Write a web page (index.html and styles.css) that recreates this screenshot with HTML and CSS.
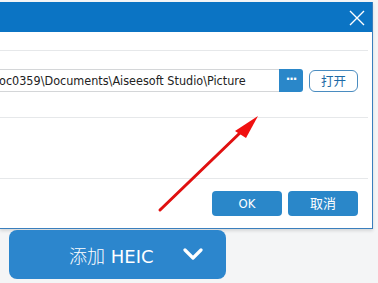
FILE: index.html
```html
<!DOCTYPE html>
<html>
<head>
<meta charset="utf-8">
<link rel="stylesheet" href="styles.css">
</head>
<body>
<div class="dialog">
  <div class="titlebar">
    <svg class="close" width="16" height="16" viewBox="0 0 16 16"><path d="M1 1L15 15M15 1L1 15" stroke="#fff" stroke-width="1.4" fill="none"/></svg>
  </div>
  <div class="row row-top"></div>
  <div class="row row-path">
    <div class="input">oc0359\Documents\Aiseesoft Studio\Picture</div>
    <div class="more">···</div>
    <div class="open">打开</div>
  </div>
  <div class="row row-empty"></div>
  <div class="footer">
    <div class="btn">OK</div>
    <div class="btn">取消</div>
  </div>
</div>
<div class="add">
  <span class="add-label"><span class="add-cn">添加</span> HEIC</span>
  <svg class="chev" width="20" height="13" viewBox="0 0 20 13"><path d="M2 2L10 10L18 2" stroke="#fff" stroke-width="3.2" fill="none" stroke-linecap="round" stroke-linejoin="round"/></svg>
</div>
<svg class="arrow" width="378" height="283" viewBox="0 0 378 283">
  <line x1="160" y1="210" x2="242" y2="131" stroke="#e01010" stroke-width="3" stroke-linecap="round"/>
  <polygon points="258,116 235,131 246,138" fill="#f01010"/>
</svg>
</body>
</html>
```
FILE: styles.css
```css
html, body {
  margin: 0;
  padding: 0;
}
body {
  width: 378px;
  height: 283px;
  overflow: hidden;
  background: #f4f5f6;
  position: relative;
  font-family: "DejaVu Sans", "Noto Sans CJK SC", sans-serif;
}
.dialog {
  margin-top: 2px;
  width: 372px;
  background: #fff;
  border-right: 1px solid #3a7fbd;
  border-bottom: 1px solid #3a7fbd;
  box-shadow: 0 2px 3px rgba(0,0,0,0.12);
}
.titlebar {
  height: 30px;
  background: #0b74c4;
  display: flex;
  align-items: center;
  justify-content: flex-end;
  padding-right: 7px;
}
.close {
  display: block;
  margin-top: 1px;
}
.row {
  border-bottom: 1px solid #e6e8ea;
  margin-right: 4px;
}
.row-top {
  height: 18px;
}
.row-path {
  padding-top: 18px;
  box-sizing: border-box;
  height: 67px;
  display: flex;
  align-items: flex-start;
}
.input {
  width: 280px;
  height: 23px;
  box-sizing: border-box;
  border: 1px solid #d4d6d8;
  border-left: none;
  border-right: none;
  font-family: "DejaVu Sans Condensed", "DejaVu Sans", sans-serif;
  font-size: 12.5px;
  line-height: 21px;
  color: #222;
  white-space: nowrap;
  overflow: hidden;
  margin-left: -1px;
}
.more {
  width: 24px;
  height: 23px;
  background: #2a87c9;
  border-radius: 0 3px 3px 0;
  color: #fff;
  font-size: 12px;
  line-height: 20px;
  text-align: center;
  font-weight: bold;
  letter-spacing: -1px;
}
.open {
  margin-left: 6px;
  width: 49px;
  height: 22px;
  box-sizing: border-box;
  border: 1px solid #4a8cc0;
  border-radius: 6px;
  color: #1c6aa6;
  font-family: "Noto Sans CJK SC", sans-serif;
  font-size: 12.5px;
  line-height: 20px;
  text-align: center;
  margin-top: 1px;
}
.row-empty {
  height: 60px;
}
.footer {
  height: 49px;
  box-sizing: border-box;
  padding-top: 12px;
  padding-right: 14px;
  display: flex;
  justify-content: flex-end;
  gap: 6px;
}
.btn {
  width: 70px;
  height: 25px;
  background: #2a87c9;
  border-radius: 4px;
  color: #fff;
  font-family: "DejaVu Sans Condensed", "Noto Sans CJK SC", sans-serif;
  font-size: 13px;
  line-height: 25px;
  text-align: center;
}
.add {
  margin: 1px 0 0 9px;
  width: 217px;
  height: 49px;
  background: #2c86cd;
  border-radius: 8px;
  display: flex;
  align-items: center;
  padding-left: 60px;
  box-sizing: border-box;
  color: #fff;
}
.add-label {
  font-family: "DejaVu Sans", "Noto Sans CJK SC", sans-serif;
  font-size: 18px;
  width: 114px;
}
.add-cn {
  font-family: "Noto Sans CJK SC", sans-serif;
  font-weight: 300;
}
.chev {
  display: block;
}
.arrow {
  position: absolute;
  left: 0;
  top: 0;
  pointer-events: none;
}
```
